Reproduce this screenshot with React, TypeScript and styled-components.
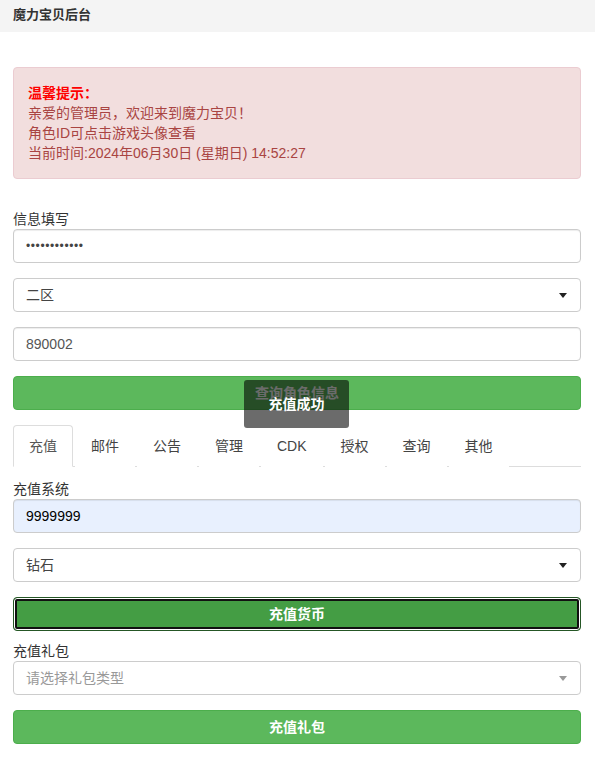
import React from "react";
import styled, { createGlobalStyle } from "styled-components";

const GlobalStyle = createGlobalStyle`
  html, body {
    margin: 0;
    padding: 0;
    background: #fff;
  }
  body {
    font-family: "Liberation Sans", "Noto Sans CJK SC", Arial, sans-serif;
    font-size: 14px;
    line-height: 20px;
    color: #333;
  }
  * {
    box-sizing: border-box;
  }
`;

const tabs = ["充值", "邮件", "公告", "管理", "CDK", "授权", "查询", "其他"];

const App = () => {
  return (
    <>
      <GlobalStyle />
      <Header>魔力宝贝后台</Header>
      <Page>
        <Alert>
          <AlertTitle>温馨提示：</AlertTitle>
          <div>亲爱的管理员，欢迎来到魔力宝贝！</div>
          <div>角色ID可点击游戏头像查看</div>
          <div>当前时间:2024年06月30日 (星期日) 14:52:27</div>
        </Alert>

        <Label>信息填写</Label>
        <Group>
          <Field>
            <Dots>••••••••••••</Dots>
          </Field>
        </Group>
        <Group>
          <SelectBox>
            <span>二区</span>
            <Caret />
          </SelectBox>
        </Group>
        <Group>
          <Field>890002</Field>
        </Group>
        <ButtonWrap>
          <Button>查询角色信息</Button>
          <Toast>充值成功</Toast>
        </ButtonWrap>

        <Tabs>
          {tabs.map((t, i) => (
            <Tab key={t} $active={i === 0}>
              {t}
            </Tab>
          ))}
        </Tabs>

        <TabBody>
          <Label>充值系统</Label>
          <Group>
            <Field $autofill>9999999</Field>
          </Group>
          <Group>
            <SelectBox>
              <span>钻石</span>
              <Caret />
            </SelectBox>
          </Group>
          <Button $focused>充值货币</Button>

          <Label $top={10}>充值礼包</Label>
          <Group>
            <SelectBox $placeholder>
              <span>请选择礼包类型</span>
              <Caret $muted />
            </SelectBox>
          </Group>
          <Button>充值礼包</Button>
        </TabBody>
      </Page>
    </>
  );
};

export default App;

const Header = styled.div`
  height: 32px;
  background: #f4f4f4;
  padding: 5px 13px;
  font-size: 13px;
  font-weight: bold;
  line-height: 20px;
  color: #333;
`;

const Page = styled.div`
  padding: 35px 14px 20px 13px;
`;

const Alert = styled.div`
  background: #f2dede;
  border: 1px solid #ebccd1;
  border-radius: 4px;
  color: #a94442;
  padding: 15px 14px;
  margin-bottom: 30px;
`;

const AlertTitle = styled.div`
  color: #f00;
  font-weight: bold;
`;

const Label = styled.div<{ $top?: number }>`
  color: #333;
  height: 20px;
  margin-top: ${(p) => p.$top ?? 0}px;
`;

const Group = styled.div`
  margin-bottom: 15px;
`;

const Field = styled.div<{ $autofill?: boolean }>`
  height: 34px;
  border: 1px solid #ccc;
  border-radius: 4px;
  padding: 6px 12px;
  background: ${(p) => (p.$autofill ? "#e8f0fe" : "#fff")};
  color: ${(p) => (p.$autofill ? "#000" : "#555")};
  box-shadow: inset 0 1px 1px rgba(0, 0, 0, 0.075);
`;

const Dots = styled.span`
  font-size: 12px;
  letter-spacing: 0.6px;
  color: #444;
  vertical-align: top;
  line-height: 20px;
`;

const SelectBox = styled.div<{ $placeholder?: boolean }>`
  height: 34px;
  border: 1px solid #ccc;
  border-radius: 4px;
  padding: 6px 12px;
  display: flex;
  align-items: center;
  justify-content: space-between;
  color: ${(p) => (p.$placeholder ? "#999" : "#444")};
  background: #fff;
`;

const Caret = styled.span<{ $muted?: boolean }>`
  width: 0;
  height: 0;
  border-style: solid;
  border-width: 5px 4px 0 4px;
  border-color: ${(p) => (p.$muted ? "#999" : "#222")} transparent transparent transparent;
  margin-right: 1px;
`;

const ButtonWrap = styled.div`
  position: relative;
  margin-bottom: 15px;
`;

const Button = styled.div<{ $focused?: boolean }>`
  height: 34px;
  border-radius: 4px;
  border: 1px solid ${(p) => (p.$focused ? "#255625" : "#4cae4c")};
  background: ${(p) => (p.$focused ? "#449d44" : "#5cb85c")};
  color: #fff;
  font-weight: bold;
  display: flex;
  align-items: center;
  justify-content: center;
  box-shadow: ${(p) =>
    p.$focused ? "inset 0 0 0 1px #fff, inset 0 0 0 3px #111" : "none"};
`;

const Toast = styled.div`
  position: absolute;
  left: 231px;
  top: 4px;
  width: 105px;
  height: 48px;
  border-radius: 3px;
  background: rgba(0, 0, 0, 0.58);
  color: #fff;
  font-weight: bold;
  display: flex;
  align-items: center;
  justify-content: center;
`;

const Tabs = styled.div`
  display: flex;
  border-bottom: 1px solid #ddd;
  height: 42px;
`;

const Tab = styled.div<{ $active?: boolean }>`
  padding: 10px 15px;
  margin-right: 2px;
  border: 1px solid ${(p) => (p.$active ? "#ddd" : "transparent")};
  border-bottom-color: ${(p) => (p.$active ? "#fff" : "transparent")};
  border-radius: 4px 4px 0 0;
  background: #fff;
  color: ${(p) => (p.$active ? "#555" : "#444")};
  height: 42px;
`;

const TabBody = styled.div`
  padding-top: 12px;
`;
